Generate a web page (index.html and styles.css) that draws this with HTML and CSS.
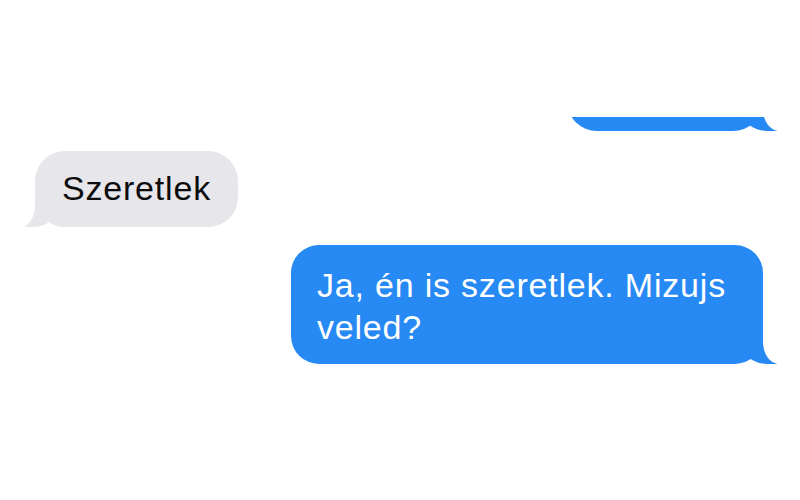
FILE: index.html
```html
<!DOCTYPE html>
<html>
    <head>
        <meta charset="utf-8">
        <title>Üzenetek</title>
        <link rel="stylesheet" href="styles.css">
    </head>
    <body>
        <div class="thread">
            <div class="row me clip">
                <div class="msg me tall">&nbsp;</div>
            </div>
            <div class="row them">
                <div class="msg them">Szeretlek</div>
            </div>
            <div class="row me">
                <div class="msg me wide">Ja, én is szeretlek. Mizujs veled?</div>
            </div>
        </div>
    </body>
</html>
```

FILE: styles.css
```css
*{box-sizing:border-box;}
body,html{
    margin: 0;
    width:100%;
    height:100%;
    background: #fff;
    font-family: "Liberation Sans", Arial, sans-serif;
}
.thread{display:flex; flex-direction:column; padding-top:117px;}
.row{display:flex; padding:0 37px 0 35px;}
.row.me{justify-content:flex-end;}
.row.them{justify-content:flex-start; margin-top:20px;}
.row.them + .row.me{margin-top:18px;}

.clip{height:14px; overflow:hidden; align-items:flex-end;}
.clip .msg{flex:none;}

.msg{
    position:relative;
    font-size:34px;
    letter-spacing:0.8px;
    line-height:42px;
    border-radius:30px;
    padding:16px 27px 18px 27px;
}
.msg.them{background:#e6e6eb; color:#0c0c0c;}
.msg.me{background:#2689f4; color:#fff;}
.msg.wide{width:472px; padding:19px 30px 16px 26px; border-radius:28px;}
.msg.tall{width:196px; height:60px;}

/* tails */
.msg::before,.msg::after{content:""; position:absolute; bottom:0; height:32px;}
.msg.me::before{right:-14px; width:36px; background:#2689f4; border-bottom-left-radius:26px 22px;}
.msg.me::after{right:-40px; width:40px; background:#fff; border-bottom-left-radius:16px 22px;}
.msg.them::before{left:-10px; width:32px; background:#e6e6eb; border-bottom-right-radius:24px 20px;}
.msg.them::after{left:-36px; width:36px; background:#fff; border-bottom-right-radius:14px 22px;}
```
